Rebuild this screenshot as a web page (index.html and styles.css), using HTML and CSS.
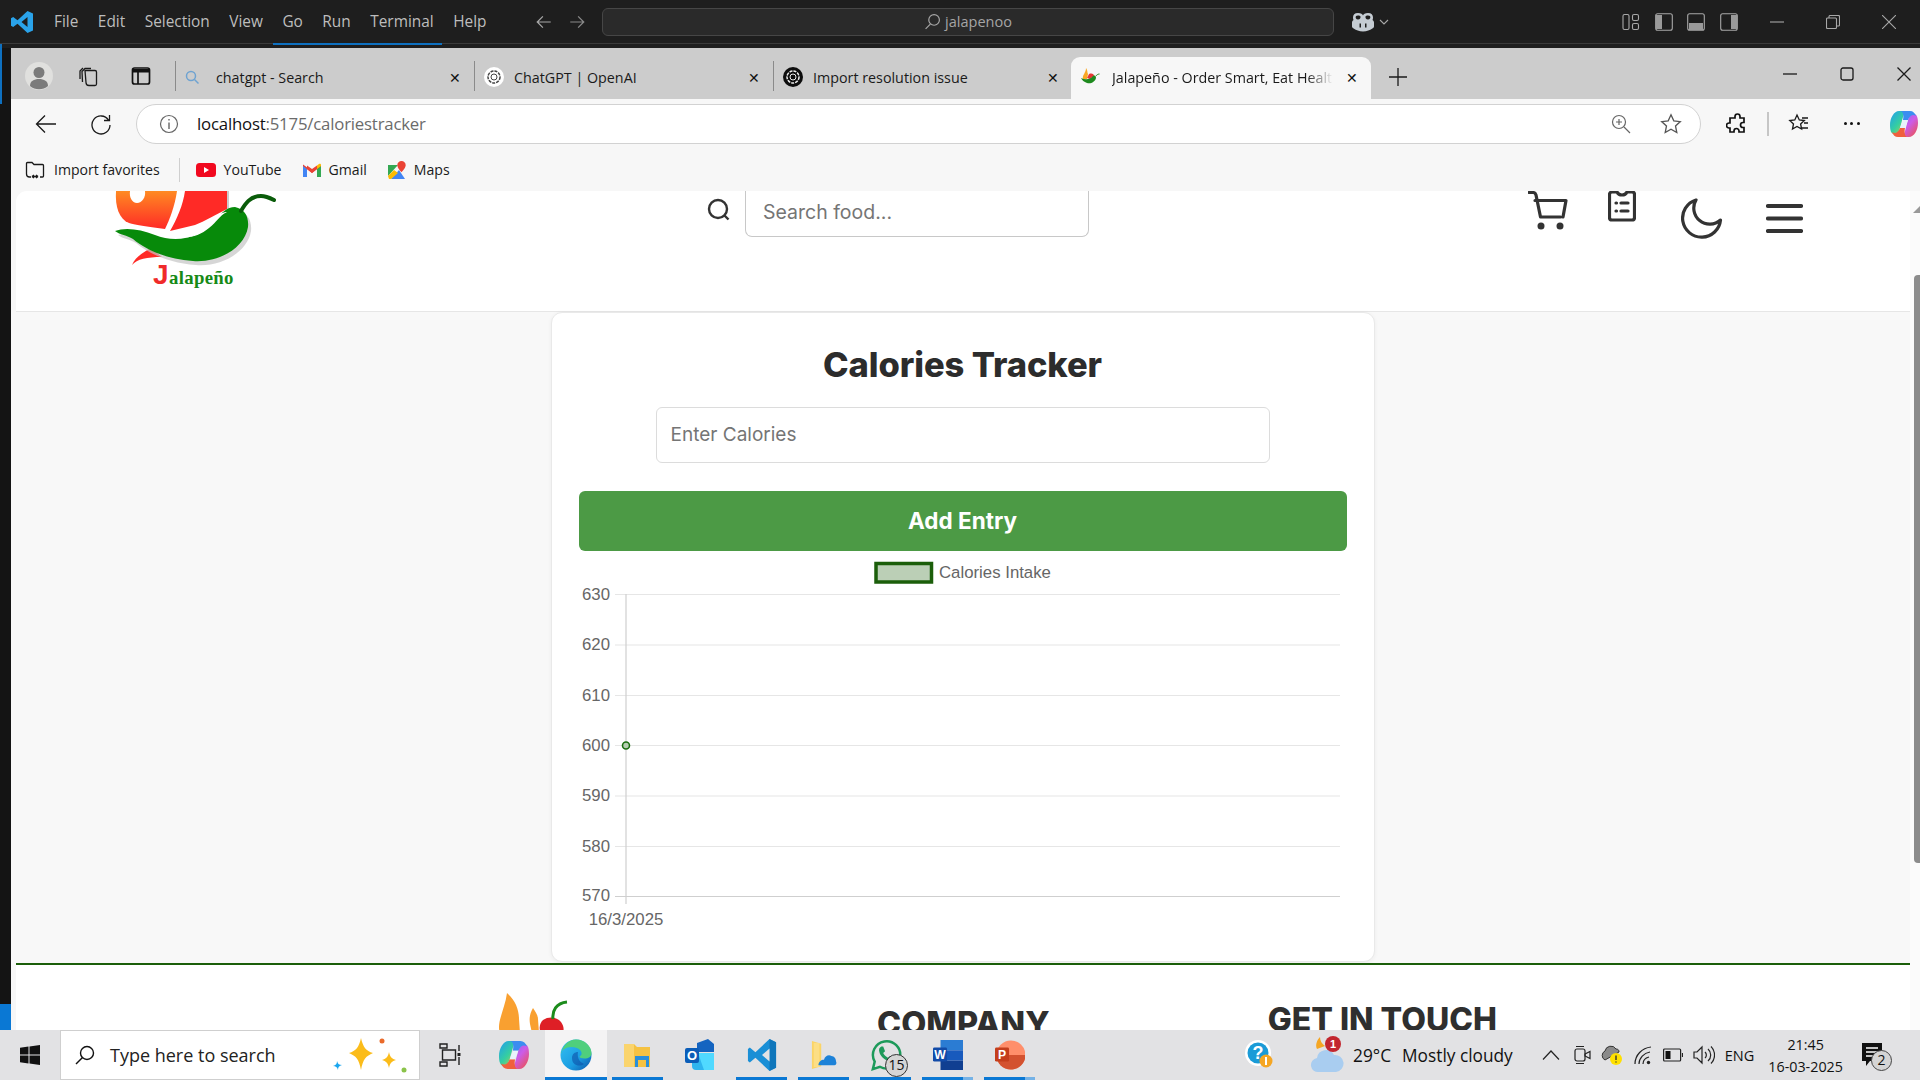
FILE: index.html
```html
<!DOCTYPE html>
<html lang="en">
<head>
<meta charset="utf-8">
<title>Jalapeño - Calories Tracker</title>
<link rel="stylesheet" href="styles.css">
</head>
<body>
<header class="vs">
  <svg class="vs-logo" viewBox="0 0 24 24" width="24" height="24"><path fill="#2aa3ea" d="M17.5 1 23 3.5v17L17.5 23 7.5 13.7 3.2 17 1 15.8V8.2L3.2 7l4.3 3.3zM17.5 7l-6 5 6 5z"/></svg>
  <nav class="vs-menu"><span>File</span><span>Edit</span><span>Selection</span><span>View</span><span>Go</span><span>Run</span><span>Terminal</span><span>Help</span></nav>
  <div class="vs-arrows">
    <svg viewBox="0 0 16 16" width="18" height="18"><path d="M14 8H2M7 3 2 8l5 5" class="st-g"/></svg>
    <svg viewBox="0 0 16 16" width="18" height="18"><path d="M2 8h12M9 3l5 5-5 5" class="st-dg"/></svg>
  </div>
  <div class="vs-command">
    <svg viewBox="0 0 16 16" width="17" height="17"><circle cx="9.5" cy="6.5" r="5" class="st-g"/><path d="M6 10.500 1.500 15" class="st-g"/></svg>
    <span>jalapenoo</span>
  </div>
  <div class="vs-copilot">
    <svg viewBox="0 0 24 20" width="24" height="20"><path fill="#c5ccd3" d="M7 1c3 0 4.500 1 5 2.500C12.500 2 14 1 17 1c3.500 0 5 1.800 5 4.500 0 1-.2 2-.5 2.500.8.600 1.500 1.500 1.500 2.500v4c0 1-1 1.700-2 2.300C19 18 16 19.500 12 19.500S5 18 3 16.800c-1-.6-2-1.300-2-2.300v-4c0-1 .7-1.900 1.500-2.500C2.200 7.500 2 6.500 2 5.500 2 2.800 3.500 1 7 1z"/><path fill="#1e1e1e" d="M5 4c1.500-1 4-.5 4.500.5.300 1-.5 3-2.500 3S4 5.500 5 4zm14 0c-1.500-1-4-.5-4.500.5-.3 1 .5 3 2.500 3s3-2 2-3.500zM8.500 11.500h1.500v4H8.500zm5.500 0h1.500v4H14z"/></svg>
    <svg viewBox="0 0 10 6" width="10" height="6"><path d="M1 1l4 4 4-4" class="st-g"/></svg>
  </div>
  <div class="vs-layout">
    <svg viewBox="0 0 18 18" width="18" height="18"><rect x="1" y="1.500" width="6" height="15" rx="1.500" class="st-g"/><rect x="10.500" y="1.500" width="6" height="6" rx="1.500" class="st-g"/><rect x="10.500" y="10.500" width="6" height="6" rx="1.500" class="st-g"/></svg>
    <svg viewBox="0 0 18 18" width="18" height="18"><rect x=".7" y=".7" width="16.600" height="16.600" rx="2" fill="#1e1e1e" class="st-g"/><path fill="#9a9a9a" d="M1 2h6v14H1z"/></svg>
    <svg viewBox="0 0 18 18" width="18" height="18"><rect x=".7" y=".7" width="16.600" height="16.600" rx="2" fill="#1e1e1e" class="st-g"/><path fill="#9a9a9a" d="M2 10h14v7H2z"/></svg>
    <svg viewBox="0 0 18 18" width="18" height="18"><rect x=".7" y=".7" width="16.600" height="16.600" rx="2" fill="#1e1e1e" class="st-g"/><path fill="#9a9a9a" d="M11 2h6v14h-6z"/></svg>
  </div>
  <div class="vs-window">
    <svg viewBox="0 0 14 14" width="14" height="14"><path d="M0 7h14" class="st-g"/></svg>
    <svg viewBox="0 0 14 14" width="14" height="14"><rect x=".5" y="3" width="10" height="10.500" rx="1" class="st-g"/><path d="M3 3V1.500a1 1 0 0 1 1-1h8.500a1 1 0 0 1 1 1V10a1 1 0 0 1-1 1h-2" class="st-g"/></svg>
    <svg viewBox="0 0 14 14" width="14" height="14"><path d="M0 0l14 14M14 0 0 14" class="st-g"/></svg>
  </div>
</header>
<div class="vs-active"><i></i></div>

<div class="desk">
  <aside class="vs-side"><i class="side-top"></i><i class="side-bottom"></i></aside>
  <main class="browser">
    <div class="tabs">
      <span class="avatar"><svg viewBox="0 0 28 28" width="28" height="28"><circle cx="14" cy="14" r="14" fill="#e0e0de"/><circle cx="14" cy="10.500" r="5.500" fill="#7b7b7b"/><path fill="#7b7b7b" d="M5 24c0-5 4-7 9-7s9 2 9 7a14 14 0 0 1-18 0z"/></svg></span>
      <svg class="t-ic-coll" viewBox="0 0 22 22" width="22" height="22"><path class="st-b" d="M8 5.500h10a1.500 1.500 0 0 1 1.500 1.500v12a1.500 1.500 0 0 1-1.500 1.500h-6a3 3 0 0 1-3-3z"/><path class="st-b" d="M5.500 17 5 6.500 8 3.500h6M3 14V6l3-3"/></svg>
      <svg class="t-ic-vert" viewBox="0 0 20 20" width="20" height="20"><rect x="1.500" y="2" width="17" height="16" rx="2" class="st-b2"/><path d="M2 3h16v3.500H2z" fill="#111"/><path d="M7 6v12" class="st-b2"/></svg>
      <div class="tab tab-first">
        <svg viewBox="0 0 14 14" width="14" height="14"><circle cx="6" cy="6" r="4.500" fill="none" stroke="#6fa3d1" stroke-width="1.500"/><path d="m9.500 9.500 4 4" stroke="#6fa3d1" stroke-width="1.500"/></svg>
        <span class="tab-name">chatgpt - Search</span><span class="x">✕</span>
      </div>
      <div class="tab">
        <svg viewBox="0 0 20 20" width="20" height="20"><circle cx="10" cy="10" r="10" fill="#fff"/><circle cx="10" cy="10" r="6" fill="none" stroke="#444" stroke-width="1.500" stroke-dasharray="3 1"/><circle cx="10" cy="10" r="3" fill="none" stroke="#444"/></svg>
        <span class="tab-name">ChatGPT | OpenAI</span><span class="x">✕</span>
      </div>
      <div class="tab">
        <svg viewBox="0 0 20 20" width="20" height="20"><circle cx="10" cy="10" r="10" fill="#0d0d0d"/><circle cx="10" cy="10" r="6" fill="none" stroke="#eee" stroke-width="1.500" stroke-dasharray="3 1"/><circle cx="10" cy="10" r="3" fill="none" stroke="#eee"/></svg>
        <span class="tab-name">Import resolution issue</span><span class="x">✕</span>
      </div>
      <div class="tab tab-active">
        <svg viewBox="0 0 20 20" width="20" height="20"><path fill="#f9a825" d="M6 1c2 3 1 4 2 6l-1 5H3C2 8 6 6 6 1z"/><path fill="#e53935" d="M9 7c3-1 5 0 5 2l-4 3-3-1z"/><path fill="#1e8a1e" d="M1 11c4 2 9 2 12-2 2-1 3 0 3 2-1 4-5 6-9 5-3-1-5-3-6-5z"/><path d="M16 9c.5-1 2-2 3.500-2" stroke="#1e8a1e" fill="none"/></svg>
        <span class="tab-name tab-fade">Jalapeño - Order Smart, Eat Healthy</span><span class="x">✕</span>
      </div>
      <svg class="newtab" viewBox="0 0 18 18" width="18" height="18"><path d="M9 0v18M0 9h18" class="st-b"/></svg>
      <div class="b-window">
        <svg viewBox="0 0 14 14" width="14" height="14"><path d="M0 7h14" class="st-b"/></svg>
        <svg viewBox="0 0 14 14" width="14" height="14"><rect x="1" y="1" width="12" height="12" rx="2" class="st-b"/></svg>
        <svg viewBox="0 0 14 14" width="14" height="14"><path d="M.5.500l13 13M13.500.500l-13 13" class="st-b"/></svg>
      </div>
    </div>

    <div class="toolbar">
      <svg class="tool-back" viewBox="0 0 22 22" width="22" height="22"><path d="M21 11H1.500M10 2.500 1.500 11l8.500 8.500" class="st-b"/></svg>
      <svg class="tool-ref" viewBox="0 0 22 22" width="22" height="22"><path d="M18.500 7a9 9 0 1 0 1.500 5M19.500 2v5.500H14" class="st-b"/></svg>
      <div class="address">
        <svg viewBox="0 0 20 20" width="20" height="20"><circle cx="10" cy="10" r="8.500" fill="none" stroke="#666" stroke-width="1.200"/><path d="M10 8.500V15M10 5v1.600" stroke="#666" stroke-width="1.400"/></svg>
        <span class="url"><b>localhost</b>:5175/caloriestracker</span>
        <svg class="addr-zoom" viewBox="0 0 20 20" width="20" height="20"><circle cx="8" cy="8" r="6.500" fill="none" stroke="#666" stroke-width="1.200"/><path d="m13 13 6 6M8 5v6M5 8h6" stroke="#666" stroke-width="1.200"/></svg>
        <svg class="addr-star" viewBox="0 0 22 22" width="22" height="22"><path d="m11 1.800 2.800 6 6.500.8-4.800 4.400 1.300 6.500-5.800-3.300-5.800 3.300L6.500 13 1.700 8.600l6.500-.8z" fill="none" stroke="#555" stroke-width="1.300"/></svg>
      </div>
      <svg class="tool-puzzle" viewBox="0 0 22 22" width="22" height="22"><path class="st-b2" d="M9 3.500a2.500 2.500 0 0 1 5 0V5h4v4.500h-1a2.500 2.500 0 0 0 0 5h1V19h-5v-1a2.500 2.500 0 0 0-5 0v1H4v-4H3a2.500 2.500 0 0 1 0-5h1V5h5z"/></svg>
      <i class="tool-sep"></i>
      <svg class="tool-fav" viewBox="0 0 22 22" width="22" height="22"><path d="m9 2 2.300 5 5 .6-3.700 3.400 1 5-4.600-2.600-4.500 2.600 1-5L1.800 7.600l5-.6zM14 5h6M16 10h4M14 15h6" class="st-b"/></svg>
      <span class="tool-dots"><i></i><i></i><i></i></span>
      <svg class="tool-copilot" viewBox="0 0 28 28" width="28" height="28"><defs><linearGradient id="cpa" x1="0" y1="0" x2="1" y2="1"><stop offset="0" stop-color="#1f9df0"/><stop offset=".5" stop-color="#35cfa0"/><stop offset="1" stop-color="#f5c623"/></linearGradient><linearGradient id="cpb" x1="0" y1="0" x2="1" y2="1"><stop offset="0" stop-color="#6f6cf5"/><stop offset=".5" stop-color="#cc5ce8"/><stop offset="1" stop-color="#f0503d"/></linearGradient></defs><g id="cp-mark"><path fill="url(#cpa)" d="M9 1h10c-3 0-5 2-6 6l-3 11c-.9 3-2.500 6-6 6-3 0-4-4-4-9C0 8 4 1 9 1z"/><path fill="url(#cpb)" d="M19 27H9c3 0 5-2 6-6l3-11c.9-3 2.500-6 6-6 3 0 4 4 4 9 0 7-4 14-9 14z"/><path fill="#3b8df0" d="M11 1h9c3 0 5 2 6 5-3-2-6-1-8 4h-5c1-5 0-8-2-9z"/><path fill="#f0603d" d="M17 27H8c-3 0-5-2-6-5 3 2 6 1 8-4h5c-1 5 0 8 2 9z"/><path fill="#e8f2fb" d="M13 10h5l-3 8h-5z"/></g></svg>
    </div>

    <div class="favbar">
      <span class="fav"><svg viewBox="0 0 20 20" width="20" height="20"><path d="M1.500 14V3.500a1 1 0 0 1 1-1H7l2 2h8.500a1 1 0 0 1 1 1V16a1 1 0 0 1-1 1H15M1.500 14a3 3 0 0 0 3 3H6M7 16.500h6M7 16.500l2-1.500M7 16.500 9 18M13 16.500 11 15M13 16.500 11 18" class="st-b"/></svg>Import favorites</span>
      <i class="fav-sep"></i>
      <span class="fav"><svg viewBox="0 0 20 14" width="20" height="14"><rect width="20" height="14" rx="3.500" fill="#f1091f"/><path d="m8 4 5 3-5 3z" fill="#fff"/></svg>YouTube</span>
      <span class="fav"><svg viewBox="0 0 18 14" width="18" height="14"><path fill="#4285f4" d="M0 2v12h4V5z"/><path fill="#34a853" d="M14 5v9h4V2z"/><path fill="#ea4335" d="M0 1.500 9 8l9-6.500V3L9 10 0 3z"/><path fill="#ea4335" d="M4 2.500 9 6l5-3.500V6L9 10 4 6z"/><path fill="#fbbc04" d="M14 2.500 16 1c1-.6 2 .1 2 1v1l-4 3z"/></svg>Gmail</span>
      <span class="fav"><svg viewBox="0 0 18 18" width="18" height="18"><path fill="#34a853" d="M0 4h10L0 15z"/><path fill="#4285f4" d="M3 18 11 9l6 9z"/><path fill="#fbbc04" d="M0 15 6 9l4 3-7 6H1z"/><path fill="#ea4335" d="M13.500 0a4.200 4.200 0 0 1 4.200 4.200c0 2.800-4.200 7-4.200 7s-4.200-4.200-4.200-7A4.200 4.200 0 0 1 13.500 0z"/></svg>Maps</span>
    </div>

    <div class="viewport">
      <div class="page">
        <section class="site-head">
          <svg class="logo" viewBox="0 0 162 100" width="162" height="100">
            <defs><linearGradient id="lg-fire" x1="0" y1="0" x2="0" y2="1"><stop offset="0" stop-color="#ff8a22"/><stop offset="1" stop-color="#ff2a26"/></linearGradient></defs>
            <path fill="url(#lg-fire)" d="M1 0h61c-2 14-7 28-12 38-15-2-30-4-36-6C4 28 0 16 1 0z"/>
            <path fill="#ff2a26" d="M68 0h44v18c-12 6-22 12-32 16l-25 6c7-12 13-26 15-40z"/>
            <path fill="#ccc" d="M112 0h2v18l-2 1z"/>
            <path fill="#fff" d="M15 0h15c1 6-3 12-8 12S14 6 15 0z"/>
            <path fill="#ff2a26" d="M42 62 34 58c-6 4-14 8-17 16 5-6 15-8 30-8z"/>
            <path fill="#c4c4c4" d="M3 44C13 40 28 42 43 48c20 8 45 4 60-14 6-8 12-14 20-14 10 2 14 10 13 20-3 20-28 36-55 34C53 72 33 62 21 52 15 48 8 48 3 44z" opacity=".7"/>
            <path fill="#078a0a" d="M0 40C10 36 25 38 40 44c20 8 45 4 60-14 6-8 12-14 20-14 10 2 14 10 13 20-3 20-28 36-55 34C50 68 30 58 18 48 12 44 5 44 0 40z"/>
            <path fill="#fff" d="M68 47c14-2 22-8 30-19 5-5 10-7 14-7-8 4-10 10-18 16-7 6-15 9-26 10z"/>
            <path fill="none" stroke="#0a5c0a" stroke-width="4" stroke-linecap="round" d="M126 20c4-7 9-15 20-15 5 0 9 2 13 4"/>
            <text x="38" y="93" class="logo-j">J</text><text x="54" y="93" class="logo-t">alapeño</text>
          </svg>
          <div class="site-search">
            <svg viewBox="0 0 24 24" width="24" height="24"><circle cx="11" cy="11" r="9" fill="none" stroke="#333" stroke-width="2.400"/><path d="m17.500 17.500 4 4" stroke="#333" stroke-width="2.400"/></svg>
            <div class="search-box">Search food...</div>
          </div>
          <div class="site-icons">
            <svg class="ic-cart" viewBox="0 0 40 40" width="40" height="40"><path d="M1 1.500h4c1.500 0 2.500 1 3 2.500l4.500 22h20M7 9.500h31L35 26" class="st-d"/><circle cx="13" cy="35" r="3.500" fill="#333"/><circle cx="32" cy="35" r="3.500" fill="#333"/></svg>
            <svg class="ic-list" viewBox="0 0 28 32" width="28" height="32"><path d="M9 2H4a2.500 2.500 0 0 0-2.500 2.500v23A2.500 2.500 0 0 0 4 30h20a2.500 2.500 0 0 0 2.500-2.500v-23A2.500 2.500 0 0 0 24 2h-5c-1 2-2.500 3-5 3s-4-1-5-3zM8 13h.5M8 21h.5M13 13h7M13 21h7" class="st-d"/></svg>
            <svg class="ic-moon" viewBox="0 0 42 42" width="42" height="42"><path d="M15 2A19 19 0 1 0 39.500 22 16 16 0 0 1 15 2z" class="st-d"/></svg>
            <svg class="ic-menu" viewBox="0 0 37 30" width="37" height="30"><path d="M2 3h33M2 15.500h33M2 28h33" class="st-d st-d4"/></svg>
          </div>
        </section>

        <section class="stage">
          <article class="card">
            <h1>Calories Tracker</h1>
            <div class="cal-input">Enter Calories</div>
            <button class="add-btn" type="button">Add Entry</button>
            <svg class="chart" viewBox="0 0 768 370" width="768" height="370">
              <rect x="297" y="3.500" width="55.500" height="18.500" class="leg-box"/>
              <text x="360" y="18" class="ch-t">Calories Intake</text>
              <g class="grid">
                <path d="M36 34.500h725M36 85h725M36 135.500h725M36 185.500h725M36 236h725M36 286.500h725"/>
                <path class="grid-b" d="M36 336.500h725M47 34v310"/>
              </g>
              <g class="ch-y">
                <text x="31" y="40">630</text><text x="31" y="90">620</text><text x="31" y="140.500">610</text><text x="31" y="191">600</text><text x="31" y="241">590</text><text x="31" y="291.500">580</text><text x="31" y="341">570</text>
              </g>
              <text x="47" y="365" class="ch-x">16/3/2025</text>
              <circle cx="47" cy="185.500" r="3.500" class="pt"/>
            </svg>
          </article>
        </section>

        <footer class="site-foot">
          <svg class="foot-logo" viewBox="0 0 72 40" width="72" height="40">
            <path fill="#f9a030" d="M10 0c8 7 12 16 12 26l1 14H3C-1 30 8 16 10 0z"/>
            <path fill="#f9a030" d="M36 15c-3 5-4 10-3 16l2 9h7l-1-14c0-4-3-8-5-11z"/>
            <path fill="#de1f26" d="M46 27c6-4 14-3 18 2 3 4 3 8 2 11H44c-2-4-2-9 2-13z"/>
            <path fill="none" stroke="#1c8c1c" stroke-width="3" d="M56 26c-1-8 3-16 14-17"/>
          </svg>
          <h2 class="foot-co">COMPANY</h2>
          <h2 class="foot-touch">GET IN TOUCH</h2>
        </footer>
      </div>
      <div class="scrollbar"><i class="sb-up"></i><i class="sb-thumb"></i></div>
    </div>
  </main>
</div>

<footer class="taskbar">
  <svg class="win" viewBox="0 0 20 20" width="20" height="20"><path fill="#111" d="M0 2.800 8.500 1.600v8H0zM9.500 1.500 20 0v9.600H9.500zM0 10.500h8.500v8L0 17.300zM9.500 10.500H20V20L9.500 18.600z"/></svg>
  <div class="tb-search">
    <svg viewBox="0 0 20 20" width="20" height="20"><circle cx="12" cy="8" r="6.500" fill="none" stroke="#111" stroke-width="1.400"/><path d="M7.500 12.500 1 19" stroke="#111" stroke-width="1.400"/></svg>
    <span>Type here to search</span>
    <svg class="spark" viewBox="0 0 78 36" width="78" height="36"><path fill="#fbbc1a" d="M29 1c2 9 5 13 12 15-7 3-10 6-12 17-2-11-5-14-12-17 7-2 10-6 12-15z"/><path fill="#fbbc1a" d="M57 15c1 5 3 7 7 8-4 1-6 3-7 8-1-5-3-7-7-8 4-1 6-3 7-8z"/><path fill="#19a6ef" d="M5 24c1 3 2 4 5 4-3 1-4 2-4 5-1-3-2-4-5-4 3-1 4-2 4-5z"/><circle cx="50" cy="4" r="2.500" fill="#ea6a2a"/><circle cx="72" cy="33" r="2.500" fill="#8bc34a"/></svg>
  </div>
  <div class="tb-apps">
    <span class="tb-app tb-view"><svg viewBox="0 0 22 24" width="22" height="24"><path d="M1 1h7v4H1zM1 19h7v4H1zM3.500 7h13v10h-13zM20 2v6M20 14v8" fill="none" stroke="#222" stroke-width="1.400"/><rect x="18.500" y="10" width="3" height="3" fill="#222"/></svg></span>
    <span class="tb-app"><svg viewBox="0 0 28 28" width="30" height="30"><use href="#cp-mark"/></svg></span>
    <span class="tb-app tb-on tb-edge"><svg viewBox="0 0 32 32" width="32" height="32"><defs><linearGradient id="edg" x1="0" y1="0" x2="1" y2="1"><stop offset="0" stop-color="#35c1f1"/><stop offset=".6" stop-color="#1b9de2"/><stop offset="1" stop-color="#0d52a8"/></linearGradient></defs><circle cx="16" cy="16" r="15.500" fill="url(#edg)"/><path fill="#4fcf7d" d="M1.500 14C3 6 9 .5 16 .5c9 0 15.500 7 15.500 14 0 3-3 5-7 5-3 0-5-1-5-2 2-1 3-3 1-6-3-4-12-5-17-1-1 1-2 2-2.500 3.500z"/><path fill="#0d52a8" d="M12 19c0-4 3-6 6-6-1 5 1 10 6 12-4 3-12 2-12-6z" opacity=".6"/></svg></span>
    <span class="tb-app tb-on"><svg viewBox="0 0 30 30" width="30" height="30"><path fill="#f5c242" d="M1 4h10l3 3h13v20H1z"/><path fill="#fde08a" d="M1 4h10v23H1z" opacity=".6"/><path fill="#2a8fd9" d="M12 16h14v11H12z"/><path fill="#f5c242" d="M15 20h8v7h-8z"/></svg></span>
    <span class="tb-app"><svg viewBox="0 0 32 32" width="32" height="32"><path fill="#1464c0" d="M13 4 24 0l6 5v8H13z"/><path fill="#2fb4ee" d="M8 14h22v14a3 3 0 0 1-3 3H12a4 4 0 0 1-4-4z"/><path fill="#50d9ff" d="M14 14h16v17H20z"/><rect x="1" y="9" width="14" height="15" rx="2" fill="#0b5db8"/><text x="8" y="21" class="ic-o">O</text></svg></span>
    <span class="tb-app tb-on"><svg viewBox="0 0 32 36" width="30" height="34"><path fill="#1a8fd6" d="M24 1 31 4.500v27L24 35 9 21 3 26 1 24.500v-13L3 10l6 5z"/><path fill="#0d6fb4" d="M24 1v34l7-3.500v-27z" opacity=".8"/><path fill="#e2e2e4" d="M24 11v14l-8-7z"/></svg></span>
    <span class="tb-app tb-on"><svg viewBox="0 0 28 32" width="26" height="32"><path fill="#fbd466" d="M1 1l10 3v24l-10 3z"/><path fill="#fde49a" d="M3 3h6v26H3z" opacity=".6"/><path fill="#1d82d8" d="M8 27c0-4 3-6 6-6 1-4 5-6 8-4 3 0 5 3 5 6 1 2 0 4-2 4z"/></svg></span>
    <span class="tb-app tb-on tb-wa"><svg viewBox="0 0 34 36" width="32" height="34"><path fill="none" stroke="#1d9a5a" stroke-width="2.600" d="M3 33l2-8a14.500 14.500 0 1 1 5.500 5.500z"/><path fill="#1d9a5a" d="M12 9c-2 1-3 3-2 6 1 4 5 8 9 9 3 1 5 0 6-2l-4-3-2 2c-2-1-4-3-5-5l2-2-2-5z"/></svg><em>15</em></span>
    <span class="tb-app tb-on tb-split"><svg viewBox="0 0 32 34" width="30" height="32"><path fill="#2b7cd3" d="M8 1h24v11H8z"/><path fill="#185abd" d="M8 12h24v11H8z"/><path fill="#103f91" d="M8 23h24v10H8z"/><rect y="9" width="15" height="15" rx="1.500" fill="#124ba8"/><text x="7.500" y="21" class="ic-o">W</text></svg></span>
    <span class="tb-app tb-on tb-split"><svg viewBox="0 0 32 34" width="30" height="32"><circle cx="17" cy="17" r="15.500" fill="#ff8f6b"/><path fill="#d35230" d="M1.500 17h31c0 9-7 15.500-15.500 15.500S1.500 26 1.500 17z"/><rect y="9" width="15" height="15" rx="1.500" fill="#c43e1c"/><text x="7.500" y="21" class="ic-o">P</text></svg></span>
  </div>
  <div class="tb-tray">
    <span class="tr-help"><svg viewBox="0 0 30 30" width="30" height="30"><circle cx="13" cy="13" r="13" fill="#fff"/><circle cx="13" cy="13" r="10.500" fill="#1a9bd7"/><text x="13" y="19" class="ic-q">?</text><circle cx="21" cy="21" r="6.500" fill="#f5a623"/><rect x="20" y="17" width="2" height="8" fill="#fff"/></svg></span>
    <span class="tr-weather"><svg viewBox="0 0 34 38" width="34" height="38"><path fill="#f5a623" d="M10 2c-3 3-5 8-3 12l8-3c-3-2-5-5-5-9z"/><path fill="#a9cdf0" d="M9 37a7 7 0 0 1-2-14 9 9 0 0 1 17-3 8 8 0 0 1 2 17z"/><circle cx="23" cy="9" r="8" fill="#c2262e"/><text x="23" y="13" class="ic-one">1</text></svg></span>
    <span class="tr-temp">29°C</span>
    <span class="tr-cond">Mostly cloudy</span>
    <svg class="tr-chev" viewBox="0 0 18 10" width="18" height="10"><path d="M1 9.500 9 1l8 8.500" class="st-t"/></svg>
    <svg class="tr-i tr-first" viewBox="0 0 18 20" width="18" height="20"><rect x="2" y="4" width="10" height="12" rx="2" class="st-t"/><path d="m12 9 5-2.500v7L12 11zM3 1.500h8M3 18.500h8" class="st-t"/></svg>
    <svg class="tr-i" viewBox="0 0 22 22" width="22" height="22"><path d="M4 16a5 5 0 0 1 0-9 6 6 0 0 1 11-2c2 0 3 1 3 3z" fill="#8a8a8a" stroke="#333"/><circle cx="15" cy="15" r="6" fill="#ffe000"/><path d="M15 11.500v4.500M15 17.500v1" stroke="#333" stroke-width="1.400"/></svg>
    <svg class="tr-i" viewBox="0 0 20 20" width="20" height="20"><path d="M2 19C2 10 9 3 18 2M6 19c0-6 5-11 11-12M10 19c0-3 2-6 6-7" class="st-t"/><circle cx="15.500" cy="17.500" r="1.700" fill="#222"/></svg>
    <svg class="tr-i" viewBox="0 0 20 14" width="20" height="14"><rect x=".6" y="1" width="17" height="12" rx="1" class="st-t"/><rect x="2.500" y="3" width="5" height="8" fill="#111"/><path d="M19.500 5v4" class="st-t"/></svg>
    <svg class="tr-i" viewBox="0 0 22 20" width="22" height="20"><path d="M1 7h3l5-5v16l-5-5H1zM12 7a4 4 0 0 1 0 6M15 4a8 8 0 0 1 0 12M18 1.500a12 12 0 0 1 0 17" class="st-t"/></svg>
    <span class="tr-lang">ENG</span>
    <span class="tr-clock"><span>21:45</span><span>16-03-2025</span></span>
    <span class="tr-notif"><svg viewBox="0 0 22 24" width="22" height="24"><path fill="#111" d="M0 0h20v18H8l-4 5v-5H0z"/><path d="M4 5h12M4 9h12M4 13h8" stroke="#fff" stroke-width="1.300"/></svg><em>2</em></span>
  </div>
</footer>
</body>
</html>
```

FILE: styles.css
```css
* { box-sizing: border-box; }
html, body { margin: 0; padding: 0; }
body {
  width: 1920px; height: 1080px; overflow: hidden;
  display: flex; flex-direction: column;
  font-family: "Open Sans", "Noto Sans", sans-serif;
  background: #141414;
}
i, em { font-style: normal; display: block; }

/* stroke helpers */
.st-g, .st-dg, .st-b, .st-b2, .st-d, .st-t { fill: none; }
.st-g { stroke: #a8a8a8; stroke-width: 1.100; }
.st-dg { stroke: #8a8a8a; stroke-width: 1.100; }
.st-b { stroke: #1a1a1a; stroke-width: 1.300; }
.st-b2 { stroke: #111; stroke-width: 1.700; }
.st-d { stroke: #333; stroke-width: 3.200; stroke-linecap: round; stroke-linejoin: round; }
.st-d4 { stroke-width: 4.200; }
.st-t { stroke: #222; stroke-width: 1.200; }

/* VS Code title bar */
.vs { height: 43px; flex: none; background: #1e1e1e; display: flex; align-items: center; color: #bdbdbd; position: relative; }
.vs-logo { margin-left: 10px; }
.vs-menu { display: flex; gap: 19.500px; margin-left: 20px; font-size: 15.400px; width: 481px; }
.vs-arrows { display: flex; gap: 15px; width: 67px; }
.vs-command { width: 732px; height: 28px; border: 1px solid #464646; border-radius: 6px; background: #2a2a2a; display: flex; align-items: center; justify-content: center; gap: 4px; font-size: 14.500px; color: #a5a5a5; }
.vs-copilot { display: flex; align-items: center; gap: 4px; margin-left: 17px; width: 271px; }
.vs-layout { display: flex; gap: 14.500px; width: 148px; }
.vs-window { display: flex; gap: 42px; }
.vs-active { height: 5px; flex: none; background: #1e1e1e; border-top: 1px solid #3a3a3a; }
.vs-active i { width: 169px; height: 2px; margin: -1px 0 0 273px; background: #0e70c0; }

.desk { flex: 1; min-height: 0; display: flex; }
.vs-side { width: 11px; flex: none; background: #141414; display: flex; flex-direction: column; justify-content: space-between; position: relative; }
.side-top { position: absolute; left: 0; top: -4px; width: 2px; height: 60px; background: #0e70c0; }
.side-bottom { margin-top: auto; height: 26px; background: #0a78d4; }

.browser { flex: 1; min-width: 0; display: flex; flex-direction: column; background: #f7f7f7; overflow: hidden; }

/* Tabs */
.tabs { height: 51px; flex: none; background: #cccccc; display: flex; align-items: flex-end; position: relative; }
.tabs > svg, .avatar { align-self: center; flex: none; }
.avatar { margin: 5px 0 0 14px; height: 28px; display: block; }
.t-ic-coll { margin: 5px 0 0 24px; }
.t-ic-vert { margin: 5px 24px 0 32px; }
.tab { width: 299px; height: 42px; flex: none; display: flex; align-items: center; gap: 10px; padding: 0 12px 2px 10px; font-size: 14.300px; color: #1a1a1a; position: relative; }
.tab::before { content: ""; position: absolute; left: 0; top: 4px; height: 30px; width: 1px; background: #8a8a8a; }
.tab-name { flex: 1; white-space: nowrap; overflow: hidden; }
.tab-first { gap: 17px; }
.x { font-size: 14px; color: #111; width: 14px; text-align: center; }
.tab-active { background: #f7f7f7; border-radius: 9px 9px 0 0; width: 300px; margin-left: -1px; padding-left: 9px; gap: 12px; }
.tab-active::before { display: none; }
.tab-fade { -webkit-mask-image: linear-gradient(90deg, #000 88%, transparent 100%); mask-image: linear-gradient(90deg, #000 88%, transparent 100%); }
.newtab { margin: 7px 0 0 18px; }
.b-window { display: flex; gap: 43px; margin-left: auto; margin-right: 9px; align-self: flex-start; margin-top: 19px; height: 14px; }

/* Toolbar */
.toolbar { height: 49px; flex: none; display: flex; align-items: center; background: #f7f7f7; padding-left: 24px; }
.tool-ref { margin-left: 33px; }
.address { width: 1565px; height: 40px; margin-left: 24px; border: 1.500px solid #d2d2d2; border-radius: 20px; background: #fff; display: flex; align-items: center; padding-left: 22px; }
.url { margin-left: 18px; font-size: 16.800px; color: #6b6b6b; letter-spacing: -.2px; }
.url b { font-weight: 400; color: #111; }
.addr-zoom { margin-left: auto; }
.addr-star { margin-left: 29px; margin-right: 18px; }
.tool-puzzle { margin-left: 25px; }
.tool-sep { width: 1.500px; height: 24px; background: #c6c6c6; margin-left: 19px; }
.tool-fav { margin-left: 19px; }
.tool-dots { display: flex; gap: 3.500px; margin-left: 34px; }
.tool-dots i { width: 3px; height: 3px; border-radius: 50%; background: #111; }
.tool-copilot { margin-left: 30px; flex: none; }

/* Favourites */
.favbar { height: 43px; flex: none; display: flex; align-items: center; background: #f7f7f7; padding-left: 14px; font-size: 14.100px; color: #1a1a1a; }
.fav { display: flex; align-items: center; gap: 8px; margin-right: 21px; white-space: nowrap; }
.fav:first-child { gap: 9px; margin-right: 19px; }
.fav-sep { width: 1px; height: 24px; background: #cfcfcf; margin-right: 16px; }

/* Page */
.viewport { flex: 1; min-height: 0; display: flex; }
.page { flex: 1; min-width: 0; overflow: hidden; font-family: Inter, "Open Sans", sans-serif; }
.scrollbar { width: 10px; flex: none; background: #fbfbfb; position: relative; }
.sb-up { position: absolute; left: 3px; top: 15px; width: 0; height: 0; border-left: 7px solid transparent; border-bottom: 7px solid #999; }
.sb-thumb { position: absolute; right: 0; top: 84px; width: 6px; height: 588px; background: #8c8c8c; border-radius: 4px 0 0 4px; }

.site-head { margin-left: 5px; height: 121px; background: #fff; border-radius: 11px 0 0 0; border-bottom: 1px solid #e6e6e6; display: flex; align-items: flex-start; }
.logo { margin-left: 99px; flex: none; }
.logo-j { font: 700 28px "Liberation Sans", sans-serif; fill: #f02a2a; }
.logo-t { font: 700 18.800px "Liberation Serif", serif; fill: #168a16; letter-spacing: .3px; }
.site-search { display: flex; align-items: flex-start; gap: 14px; margin-left: 430px; width: 386px; padding-top: 7px; }
.search-box { width: 344px; height: 46px; margin-top: -7px; padding: 7px 17px 0; border: 1px solid #c8c8c8; border-top: 0; border-radius: 0 0 7px 7px; font-size: 19.500px; line-height: 28px; color: #757575; }
.site-icons { display: flex; align-items: flex-start; margin-left: 435px; }
.ic-list { margin: -1px 0 0 40px; }
.ic-moon { margin: 7px 0 0 45px; }
.ic-menu { margin: 12px 0 0 43px; }

.stage { height: 651px; display: flex; justify-content: center; background: #f8f8f8; padding-left: 5px; }
.card { width: 824px; height: 650px; background: #fff; border: 1px solid #e9e9e9; border-radius: 11px; display: flex; flex-direction: column; align-items: center; box-shadow: 0 1px 4px rgba(0,0,0,.05); margin-left: -1px; }
.card h1 { margin: 29px 0 0; font-size: 34.500px; line-height: 46px; font-weight: 800; color: #2c2c2c; letter-spacing: -.1px; }
.cal-input { width: 614px; height: 56px; margin-top: 19px; border: 1px solid #dcdcdc; border-radius: 6px; padding: 0 14px; font-size: 19px; line-height: 54px; color: #757575; }
.add-btn { width: 768px; height: 60px; margin-top: 28px; border: 0; border-radius: 6px; background: #4c9a45; color: #fff; font: 700 22.500px Inter, sans-serif; padding-bottom: 3px; }
.chart { display: block; margin-top: 9px; flex: none; }
.leg-box { fill: #bbcfb6; stroke: #1b5e0a; stroke-width: 3.500; }
.ch-t, .ch-y text, .ch-x { font: 16.800px "Liberation Sans", sans-serif; fill: #666; }
.ch-y text { text-anchor: end; }
.ch-x { text-anchor: middle; }
.grid path { stroke: #e6e6e6; stroke-width: 1.200; fill: none; }
.grid .grid-b { stroke: #cfcfcf; }
.pt { fill: #b7ceb2; stroke: #1b6e10; stroke-width: 1.600; }

.site-foot { margin-left: 5px; height: 67px; background: #fff; border-top: 2px solid #1b5e0a; display: flex; align-items: flex-start; overflow: hidden; position: relative; }
.foot-logo { margin: 28px 0 0 481px; flex: none; }
.site-foot h2 { margin: 0; font-size: 32.500px; font-weight: 800; color: #2f2f2f; white-space: nowrap; line-height: 40px; }
.foot-co { margin: 39px 0 0 308px !important; }
.foot-touch { margin: 35px 0 0 218px !important; font-size: 32px !important; }

/* Taskbar */
.taskbar { height: 50px; flex: none; background: #e2e2e4; display: flex; align-items: center; position: relative; color: #111; }
.win { margin-left: 20px; flex: none; }
.tb-search { width: 360px; height: 50px; margin-left: 20px; background: #fff; border: 1px solid #cfcfcf; display: flex; align-items: center; padding-left: 14px; gap: 15px; font-size: 18px; color: #222; flex: none; }
.spark { margin-left: auto; margin-right: 9px; }
.tb-apps { display: flex; margin-left: 1px; height: 100%; flex: none; }
.tb-app { width: 62px; height: 100%; display: flex; align-items: center; justify-content: center; position: relative; }
.tb-view svg { margin-right: 4px; }
.tb-on::after { content: ""; position: absolute; left: 5px; right: 6px; bottom: 0; height: 3px; background: #0a78d4; }
.tb-edge { background: #f4f3f4; }
.tb-edge::after { left: 0; right: 0; }
.tb-split::before { content: ""; position: absolute; left: 46px; width: 10px; bottom: 0; height: 3px; background: #75b2e6; z-index: 1; }
.tb-wa em { position: absolute; left: 30px; top: 24px; width: 23px; height: 23px; border: 1px solid #333; border-radius: 50%; background: #d5d5d5; font-size: 14px; line-height: 20px; text-align: center; color: #111; }
.ic-o { font: 700 13px "Liberation Sans", sans-serif; fill: #fff; text-anchor: middle; }
.ic-q { font: 700 18px "Liberation Sans", sans-serif; fill: #fff; text-anchor: middle; }
.ic-one { font: 700 11px "Liberation Sans", sans-serif; fill: #fff; text-anchor: middle; }

.tb-tray { display: flex; align-items: center; height: 100%; margin-left: 204px; font-size: 17.300px; flex: none; }
.tr-help { display: block; height: 30px; }
.tr-weather { display: block; height: 38px; margin: -2px 0 0 35px; }
.tr-temp { margin-left: 9px; }
.tr-cond { margin-left: 11px; white-space: nowrap; }
.tr-chev { margin-left: 29px; }
.tr-i { margin-left: 10px; flex: none; }
.tr-first { margin-left: 13px; }
.tr-lang { font-size: 14.500px; margin-left: 10px; }
.tr-clock { display: flex; flex-direction: column; align-items: center; gap: 3px; margin-left: 14px; font-size: 14.300px; line-height: 19px; }
.tr-notif { position: relative; margin-left: 19px; display: block; height: 24px; }
.tr-notif em { position: absolute; left: 9px; top: 7px; width: 21px; height: 21px; border: 1px solid #444; border-radius: 50%; background: #d5d5d5; font-size: 14px; line-height: 18px; text-align: center; }
```
